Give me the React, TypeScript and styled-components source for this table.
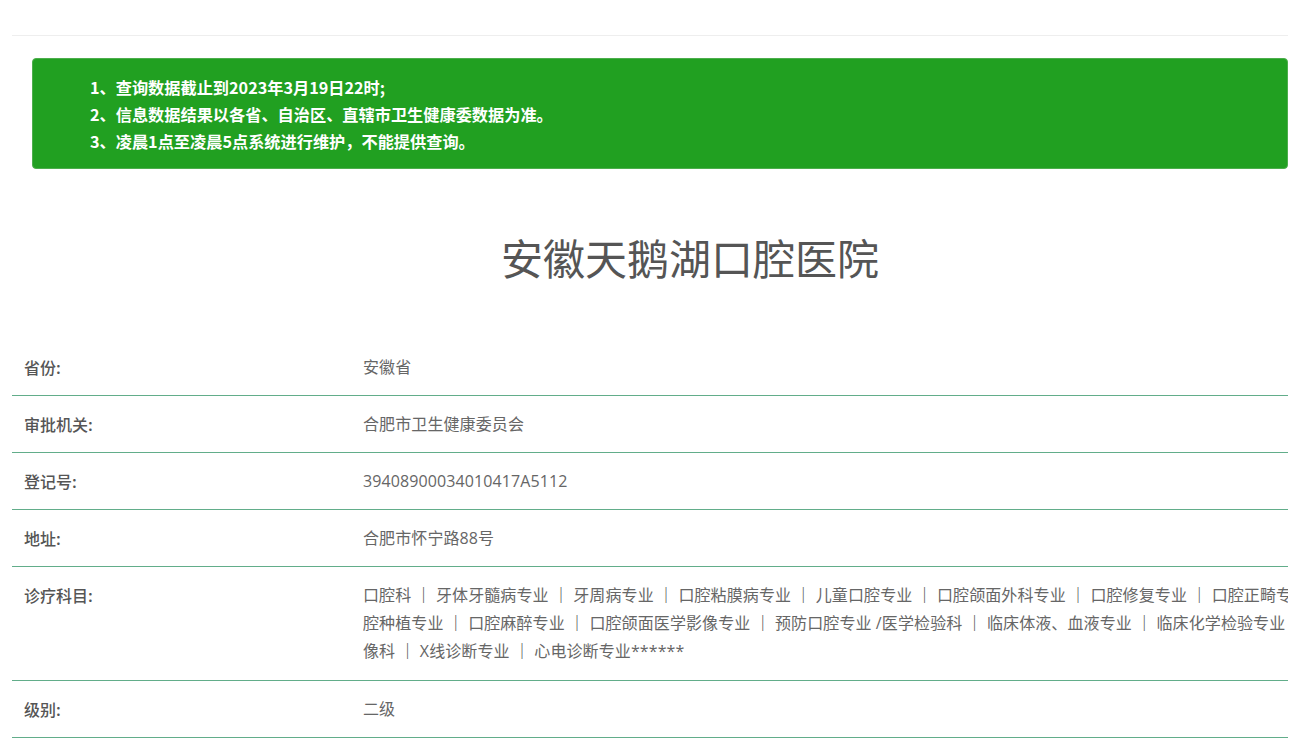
import React from "react";
import styled, { createGlobalStyle } from "styled-components";

const Global = createGlobalStyle`
  html, body { margin: 0; padding: 0; background: #fff; }
  body { font-family: "Open Sans", "Noto Sans CJK SC", sans-serif; }
`;

const Page = styled.div`
  width: 1276px;
  margin-left: 12px;
  overflow: hidden;
`;

const TopBar = styled.div`
  height: 35px;
  border-bottom: 1px solid #eeeeee;
`;

const Notice = styled.div`
  margin: 22px 0 0 20px;
  height: 111px;
  box-sizing: border-box;
  background: #21a021;
  border: 1px solid #4cae4c;
  border-radius: 4px;
  padding: 15px 0 0 57px;
  color: #fff;
  font-family: "Noto Sans CJK SC", sans-serif;
  font-size: 16.2px;
  font-weight: 700;
  line-height: 27px;
`;

const NoticeLine = styled.div`
  white-space: nowrap;
`;

const Title = styled.h1`
  margin: 60px 0 0;
  padding-left: 80px;
  text-align: center;
  font-family: "Noto Sans CJK SC", sans-serif;
  font-weight: 400;
  font-size: 42px;
  line-height: 56px;
  color: #555;
`;

const Table = styled.div`
  margin-top: 54px;
`;

const Row = styled.div<{ $multi?: boolean }>`
  display: grid;
  grid-template-columns: 351px 1fr;
  border-bottom: 1px solid #62ad8a;
  padding: 14px 0 ${(p) => (p.$multi ? "15px" : "14px")};
  font-size: 16px;
  line-height: 28px;
`;

const Label = styled.div`
  padding-left: 12px;
  color: #555;
  font-weight: 500;
  font-family: "Noto Sans CJK SC", sans-serif;
`;

const Value = styled.div`
  color: #666;
  overflow: hidden;
  font-family: "Open Sans", "Noto Sans CJK SC", sans-serif;
  letter-spacing: 0.1px;
`;

const Line = styled.div`
  white-space: nowrap;
`;

const Sep = styled.span`
  color: #555;
  font-weight: 600;
`;

const rows: { label: string; value: string[][] }[] = [
  { label: "省份:", value: [["安徽省"]] },
  { label: "审批机关:", value: [["合肥市卫生健康委员会"]] },
  { label: "登记号:", value: [["39408900034010417A5112"]] },
  { label: "地址:", value: [["合肥市怀宁路88号"]] },
  {
    label: "诊疗科目:",
    value: [
      ["口腔科", "牙体牙髓病专业", "牙周病专业", "口腔粘膜病专业", "儿童口腔专业", "口腔颌面外科专业", "口腔修复专业", "口腔正畸专业", "口"],
      ["腔种植专业", "口腔麻醉专业", "口腔颌面医学影像专业", "预防口腔专业 /医学检验科", "临床体液、血液专业", "临床化学检验专业", "医学影"],
      ["像科", "X线诊断专业", "心电诊断专业******"],
    ],
  },
  { label: "级别:", value: [["二级"]] },
];

export default function App() {
  return (
    <>
      <Global />
      <Page>
        <TopBar />
        <Notice>
          <NoticeLine>1、查询数据截止到2023年3月19日22时;</NoticeLine>
          <NoticeLine>2、信息数据结果以各省、自治区、直辖市卫生健康委数据为准。</NoticeLine>
          <NoticeLine>3、凌晨1点至凌晨5点系统进行维护，不能提供查询。</NoticeLine>
        </Notice>
        <Title>安徽天鹅湖口腔医院</Title>
        <Table>
          {rows.map((r) => (
            <Row key={r.label} $multi={r.value.length > 1}>
              <Label>{r.label}</Label>
              <Value>
                {r.value.map((parts, i) => (
                  <Line key={i}>
                    {parts.map((p, j) => (
                      <React.Fragment key={j}>
                        {j > 0 && <Sep> ｜ </Sep>}
                        {p}
                      </React.Fragment>
                    ))}
                  </Line>
                ))}
              </Value>
            </Row>
          ))}
        </Table>
      </Page>
    </>
  );
}
